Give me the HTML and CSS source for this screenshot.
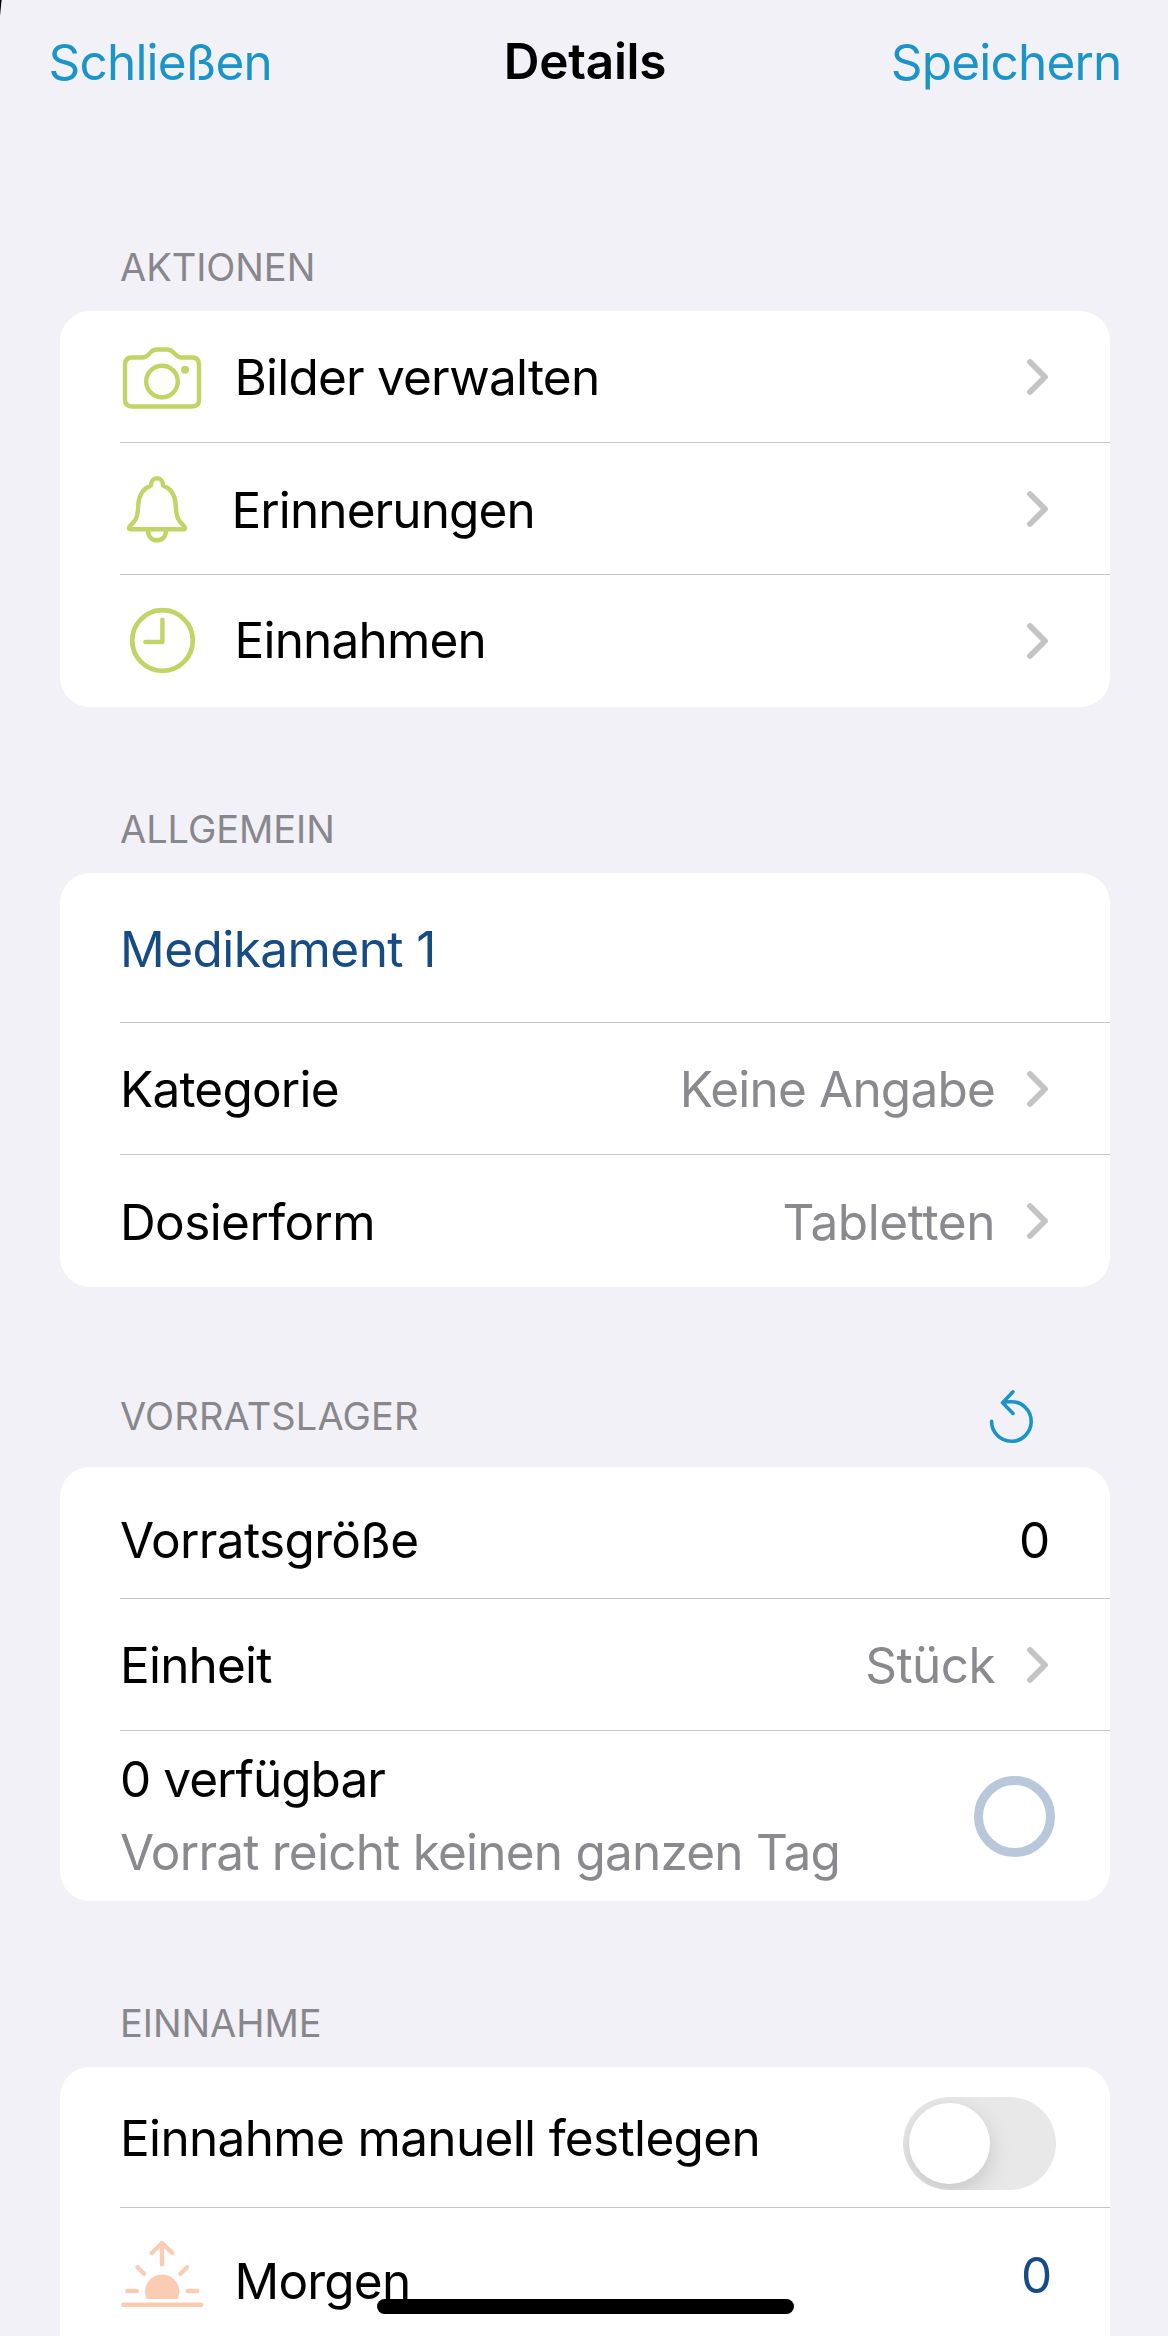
FILE: index.html
```html
<!DOCTYPE html>
<html lang="de">
<head>
<meta charset="utf-8">
<title>Details</title>
<link rel="stylesheet" href="styles.css">
</head>
<body>
<svg class="sheet-corner" viewBox="0 0 3 18"><path d="M0 0H1.6Q.8 8 0 16Z"/></svg>

<header class="navbar">
  <a class="nav-action">Schließen</a>
  <h1 class="nav-title">Details</h1>
  <a class="nav-action nav-action-end">Speichern</a>
</header>

<main class="content">
  <section class="group">
    <div class="group-header"><h2 class="group-title">AKTIONEN</h2></div>
    <div class="card">
      <div class="row">
        <svg class="row-icon green" viewBox="120 339.5 84 74">
          <path d="M132 357H143C146 357 147 355.5 149 353.5L151 351.5C153 349.5 154 349 157 349H167C170 349 171 349.5 173 351.5L175 353.5C177 355.5 178 357 181 357H192Q199 357 199 364V399Q199 406 192 406H132Q125 406 125 399V364Q125 357 132 357Z"/>
          <circle cx="162" cy="381" r="15.8"/>
          <circle class="dot" cx="185" cy="369.3" r="4"/>
        </svg>
        <span class="label">Bilder verwalten</span>
        <svg class="chevron" viewBox="0 0 24 40"><path d="M6 5L21 20L6 35"/></svg>
      </div>
      <div class="row">
        <svg class="row-icon green" viewBox="120 471.5 84 74">
          <path d="M151 485C151 480.5 153.5 477.7 157 477.7S163 480.5 163 485C171 488 175 495 175.7 504C176 513 177 518 179.5 520.5C182 523.5 185 526 185 527.7Q185 528.7 183 528.7H131Q129 528.7 129 527.7C129 526 132 523.5 134.5 520.5C137 518 138 513 138.3 504C139 495 143 488 151 485Z"/>
          <path d="M148 530C148 536 151.5 539.8 157 539.8S166 536 166 530"/>
        </svg>
        <span class="label label-reminders">Erinnerungen</span>
        <svg class="chevron" viewBox="0 0 24 40"><path d="M6 5L21 20L6 35"/></svg>
      </div>
      <div class="row">
        <svg class="row-icon green" viewBox="120 604 84 74">
          <circle class="dial" cx="162.5" cy="640.5" r="30.3"/>
          <path d="M162.4 619.6V642H145.3"/>
        </svg>
        <span class="label label-up">Einnahmen</span>
        <svg class="chevron" viewBox="0 0 24 40"><path d="M6 5L21 20L6 35"/></svg>
      </div>
    </div>
  </section>

  <section class="group">
    <div class="group-header"><h2 class="group-title">ALLGEMEIN</h2></div>
    <div class="card">
      <div class="row row-name"><span class="label blue">Medikament 1</span></div>
      <div class="row">
        <span class="label">Kategorie</span>
        <span class="value">Keine Angabe</span>
        <svg class="chevron" viewBox="0 0 24 40"><path d="M6 5L21 20L6 35"/></svg>
      </div>
      <div class="row">
        <span class="label loose">Dosierform</span>
        <span class="value looser">Tabletten</span>
        <svg class="chevron" viewBox="0 0 24 40"><path d="M6 5L21 20L6 35"/></svg>
      </div>
    </div>
  </section>

  <section class="group">
    <div class="group-header group-header-tall">
      <h2 class="group-title group-title-stock">VORRATSLAGER</h2>
      <svg class="reset" viewBox="985 1386 54 61">
        <path d="M991.6 1421.2A19.8 19.8 0 1 0 1011.4 1401.7Q1006 1401.6 1002.6 1402.7M1013 1391.8L1002.6 1402.7L1013 1413.4"/>
      </svg>
    </div>
    <div class="card">
      <div class="row row-stock">
        <span class="label">Vorratsgröße</span>
        <span class="number">0</span>
      </div>
      <div class="row">
        <span class="label">Einheit</span>
        <span class="value loose">Stück</span>
        <svg class="chevron" viewBox="0 0 24 40"><path d="M6 5L21 20L6 35"/></svg>
      </div>
      <div class="row row-supply">
        <div class="supply-text">
          <p class="supply-line tight">0 verfügbar</p>
          <p class="supply-line muted">Vorrat reicht keinen ganzen Tag</p>
        </div>
        <span class="ring"></span>
      </div>
    </div>
  </section>

  <section class="group">
    <div class="group-header"><h2 class="group-title">EINNAHME</h2></div>
    <div class="card card-continued">
      <div class="row row-toggle">
        <span class="label">Einnahme manuell festlegen</span>
        <span class="toggle"><span class="knob"></span></span>
      </div>
      <div class="row">
        <svg class="row-icon peach" viewBox="120 2237 84 74">
          <path d="M162 2243V2264.3M151.8 2253L162 2243L172.2 2253M137.5 2267.2L144 2273.7M187 2267.2L180.4 2273.7M127.3 2291H136.7M187.7 2291H197.2M123.2 2304.7H201.2"/>
          <path class="sun" d="M146.8 2299A17.1 17.1 0 1 1 177.6 2299Z"/>
        </svg>
        <span class="label label-morning">Morgen</span>
        <span class="number number-morning blue">0</span>
      </div>
    </div>
  </section>
</main>

<div class="home-indicator"></div>
</body>
</html>
```

FILE: styles.css
```css
* {
  box-sizing: border-box;
  margin: 0;
  padding: 0;
}

body {
  position: relative;
  height: 2336px;
  overflow: hidden;
  background: #f2f1f7;
  color: #000;
  font-family: Inter, "Liberation Sans", sans-serif;
  font-size: 49.5px;
  letter-spacing: -0.8px;
  line-height: 60px;
}

.sheet-corner {
  position: absolute;
  top: 0;
  left: 0;
  width: 3px;
  height: 18px;
}

.navbar {
  display: grid;
  grid-template-columns: 1fr auto 1fr;
  align-items: center;
  height: 124px;
  padding: 0 46.5px 0 48.5px;
}

.nav-action {
  color: #1b94c7;
}

.nav-action-end {
  text-align: right;
}

.nav-title {
  padding-bottom: 2px;
  font-size: 49.5px;
  font-weight: 600;
  letter-spacing: -0.26px;
}

.content {
  display: flex;
  flex-direction: column;
  gap: 78px;
  padding: 99px 58px 0 60px;
}

.group-header {
  display: flex;
  align-items: center;
  justify-content: space-between;
  height: 88px;
  padding: 0 71px 0 60px;
}

.group-header-tall {
  height: 102px;
}

.group-title {
  color: #88878c;
  font-size: 38px;
  font-weight: 400;
  letter-spacing: -0.05px;
}

.group-title-stock {
  letter-spacing: 0.15px;
}

.reset {
  width: 54px;
  height: 61px;
  fill: none;
  stroke: #1b94c7;
  stroke-width: 3.6;
  stroke-linecap: round;
  stroke-linejoin: round;
}

.card {
  overflow: hidden;
  border-radius: 30px;
  background: #fff;
}

.card-continued {
  padding-bottom: 60px;
}

.row {
  display: flex;
  align-items: center;
  height: 132px;
  margin-left: 60px;
  padding-right: 62px;
  border-bottom: 1px solid #c5c5c7;
}

.row:last-child {
  border-bottom: 0;
}

.row-icon {
  width: 84px;
  height: 74px;
  margin-right: 30.5px;
  fill: none;
  stroke-width: 4.4;
  stroke-linecap: round;
  stroke-linejoin: round;
}

.green {
  stroke: #c0d565;
}

.green .dot {
  fill: #c0d565;
  stroke: none;
}

.green .dial {
  stroke-width: 4.8;
}

.peach {
  stroke: #f9ccb3;
}

.peach .sun {
  fill: #f9ccb3;
  stroke: none;
}

.label {
  flex: 1;
  padding-top: 1px;
  white-space: nowrap;
}

.label-reminders {
  margin-left: -3px;
  padding-top: 3px;
  letter-spacing: -0.9px;
}

.label-up {
  padding: 0 0 2px;
}

.label-morning {
  padding-top: 14px;
}

.loose {
  letter-spacing: -0.6px;
}

.looser {
  letter-spacing: -0.4px;
}

.tight {
  letter-spacing: -0.95px;
}

.blue {
  color: #164b84;
}

.row-name {
  height: 150px;
}

.row-name .label {
  padding-top: 2px;
  letter-spacing: -0.55px;
}

.value {
  margin-right: 29px;
  padding-top: 1px;
  color: #8a898e;
}

.chevron {
  width: 24px;
  height: 40px;
  fill: none;
  stroke: #c4c4c6;
  stroke-width: 5.8;
  stroke-linecap: round;
  stroke-linejoin: round;
}

.row-stock {
  padding-top: 14px;
  letter-spacing: -0.65px;
}

.number {
  margin-right: -1.5px;
}

.number-morning {
  margin-right: -3.5px;
  padding-top: 2px;
}

.row-supply {
  justify-content: space-between;
  height: 170px;
}

.supply-line {
  line-height: 73px;
}

.muted {
  color: #8a898e;
  letter-spacing: -0.78px;
}

.ring {
  width: 81px;
  height: 81px;
  margin-right: -6.5px;
  border: 9px solid #b8c8da;
  border-radius: 50%;
}

.row-toggle {
  height: 141px;
}

.row-toggle .label {
  padding-top: 2px;
  letter-spacing: -0.66px;
}

.toggle {
  width: 153px;
  height: 93px;
  margin: 13px -8px 0 0;
  padding: 6px;
  overflow: hidden;
  border-radius: 47px;
  background: #e8e8e8;
}

.knob {
  display: block;
  width: 81px;
  height: 81px;
  border-radius: 50%;
  background: #fff;
  box-shadow: 0 8px 22px rgba(0, 0, 0, 0.15);
}

.home-indicator {
  position: absolute;
  top: 2299px;
  left: 377px;
  width: 417px;
  height: 15px;
  border-radius: 8px;
  background: #000;
}
```
